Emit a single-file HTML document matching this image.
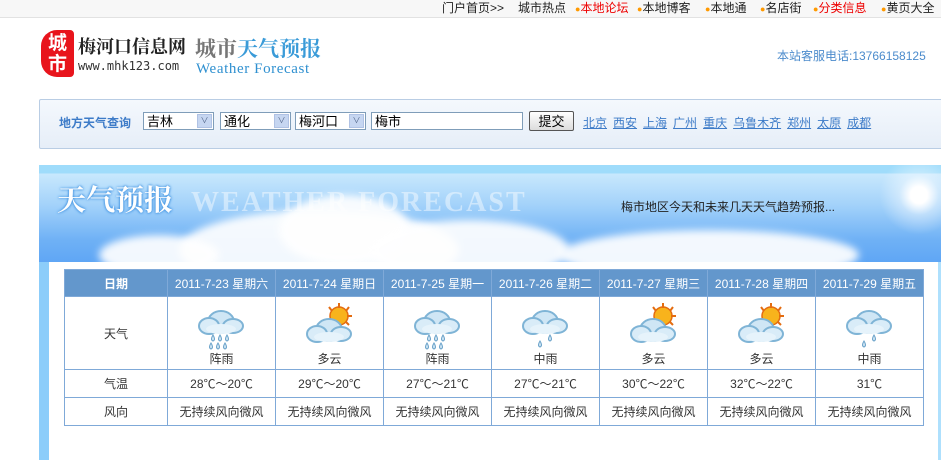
<!DOCTYPE html>
<html><head><meta charset="utf-8"><style>
body{margin:0;width:941px;height:460px;overflow:hidden;background:#fff;font-family:"Liberation Sans","Noto Sans CJK SC",sans-serif;font-size:12px;position:relative}
.a{position:absolute}
.top{left:0;top:0;width:941px;height:17px;background:#f7f7f7;border-bottom:1px solid #e2e2e2}
.top span{position:absolute;top:-1px;font-size:12px;color:#222;white-space:nowrap}
.dot{color:#f90;font-size:9px}
.red{color:#e00!important}
.search{left:39px;top:99px;width:910px;height:48px;background:linear-gradient(#f4f8fd,#e6eef8);border:1px solid #b9cde4;border-radius:2px}
.sel{position:absolute;top:12px;height:18px;border:1px solid #7f9db9;background:#fff;font-size:13px;line-height:18px;padding-left:3px;box-sizing:border-box}
.sel i{position:absolute;right:1px;top:1px;width:15px;height:14px;background:#c6d6f1;border:1px solid #b0c2e4;box-sizing:border-box;color:#4d6185;font-size:8px;text-align:center;line-height:12px;font-style:normal}
.lk a{color:#3d7bc8;text-decoration:underline;margin-right:6px;font-size:12px}
.panel{left:39px;top:165px;width:902px;height:295px;background:linear-gradient(90deg,#8ccdfa,#aee0fd);}
.banner{left:39px;top:165px;width:902px;height:97px;background:linear-gradient(#9fdcfb 0,#9fdcfb 8px,#c8e8fd 9px,#a3d2fa 40px,#6fb1f5 75px,#5fa6f5 97px)}
.cloud{position:absolute;background:#fff;border-radius:50%;filter:blur(4px);opacity:.92}
.inner{left:49px;top:262px;width:889px;height:198px;background:#fff}
table{position:absolute;left:64px;top:269px;border-collapse:collapse;width:859px;table-layout:fixed}
td{border:1px solid #7fa9d8;text-align:center;color:#333;font-size:12px;padding:0}
tr.h td{background:#6397cc;color:#fff;height:26px;font-size:12px}
</style></head><body>
<div class="a top">
<span style="left:442px">门户首页&gt;&gt;</span>
<span style="left:518px">城市热点</span>
<span style="left:575px"><b class="dot">●</b><span class="red" style="position:static">本地论坛</span></span>
<span style="left:637px"><b class="dot">●</b>本地博客</span>
<span style="left:705px"><b class="dot">●</b>本地通</span>
<span style="left:760px"><b class="dot">●</b>名店街</span>
<span style="left:813px"><b class="dot">●</b><span class="red" style="position:static">分类信息</span></span>
<span style="left:881px"><b class="dot">●</b>黄页大全</span>
</div>
<div class="a" style="left:41px;top:30px;width:33px;height:47px;background:#e8141c;border-radius:16px 4px 4px 16px;color:#fff;font-weight:bold;font-size:19px;line-height:21px;text-align:center;padding-top:3px;box-sizing:border-box">城<br>市</div>
<div class="a" style="left:78px;top:34px;font-size:18px;font-weight:bold;color:#222;font-family:'Noto Serif CJK SC',serif;line-height:24px;white-space:nowrap">梅河口信息网</div>
<div class="a" style="left:78px;top:60px;font-size:12px;color:#333;font-family:'DejaVu Sans Mono',monospace;line-height:12px">www.mhk123.com</div>
<div class="a" style="left:195px;top:35px;font-size:21px;font-weight:bold;color:#777;font-family:'Noto Serif CJK SC',serif;line-height:26px;white-space:nowrap">城市<span style="color:#3a9bd8">天气预报</span></div>
<div class="a" style="left:196px;top:60px;font-size:15px;color:#2f90d0;font-family:'Liberation Serif',serif;line-height:18px;letter-spacing:.6px;white-space:nowrap">Weather Forecast</div>
<div class="a" style="left:777px;top:47px;font-size:12px;color:#4b8bcc">本站客服电话:13766158125</div>

<div class="a search">
<div class="a" style="left:19px;top:14px;font-weight:bold;color:#3d7bc8;font-size:12px">地方天气查询</div>
<div class="sel" style="left:103px;width:71px">吉林<i>∨</i></div>
<div class="sel" style="left:180px;width:71px">通化<i>∨</i></div>
<div class="sel" style="left:255px;width:71px">梅河口<i>∨</i></div>
<div class="sel" style="left:331px;width:152px">梅市</div>
<div class="a" style="left:489px;top:11px;width:45px;height:20px;border:1px solid #555;border-radius:2px;background:linear-gradient(#fff,#dcdcdc);text-align:center;line-height:19px;font-size:13px;box-sizing:border-box">提交</div>
<div class="a lk" style="left:543px;top:14px;white-space:nowrap"><a>北京</a><a>西安</a><a>上海</a><a>广州</a><a>重庆</a><a>乌鲁木齐</a><a>郑州</a><a>太原</a><a>成都</a></div>
</div>

<div class="a panel"></div>
<div class="a banner" style="overflow:hidden">
<div class="cloud" style="left:140px;top:45px;width:280px;height:80px"></div>
<div class="cloud" style="left:240px;top:30px;width:130px;height:70px"></div>
<div class="cloud" style="left:330px;top:55px;width:200px;height:60px"></div>
<div class="cloud" style="left:520px;top:65px;width:300px;height:50px"></div>
<div class="cloud" style="left:60px;top:70px;width:120px;height:40px"></div>
<div style="position:absolute;left:840px;top:-10px;width:80px;height:80px;border-radius:50%;background:radial-gradient(#fff 15%,rgba(255,255,255,.4) 35%,rgba(255,255,255,0) 70%)"></div>
<div style="position:absolute;left:18px;top:13px;font-size:29px;font-weight:bold;color:#fff;font-family:'Noto Serif CJK SC',serif;text-shadow:0 0 3px #3a8fe0,0 0 2px #3a8fe0">天气预报</div>
<div style="position:absolute;left:152px;top:22px;font-size:28px;font-weight:bold;color:rgba(255,255,255,.45);font-family:'Liberation Serif',serif;letter-spacing:2px">WEATHER FORECAST</div>
<div style="position:absolute;left:582px;top:33px;font-size:12px;color:#222">梅市地区今天和未来几天天气趋势预报...</div>
</div>
<div class="a inner"></div>

<svg width="0" height="0" style="position:absolute"><defs>
<g id="cl"><ellipse cx="24" cy="20" rx="13" ry="11" fill="#cfe6f5" stroke="#7fb4d6" stroke-width="2"/><ellipse cx="12" cy="24" rx="10" ry="8" fill="#d9ecf8" stroke="#7fb4d6" stroke-width="2"/><ellipse cx="36" cy="24" rx="10" ry="7" fill="#d9ecf8" stroke="#7fb4d6" stroke-width="2"/><ellipse cx="24" cy="27" rx="15" ry="5" fill="#e6f3fb"/></g>
<g id="sun"><circle cx="34" cy="14" r="9" fill="#f8b31c" stroke="#e46c10" stroke-width="1.5"/><path d="M34 1v5M44 5l-3 4M47 14h-5M44 23l-3-3M24 5l3 4" stroke="#e46c10" stroke-width="2"/></g>
<g id="drop"><path d="M0 0q-3 5 0 6q3-1 0-6z" fill="#cde4f3" stroke="#6aa2c9"/></g>
</defs></svg>

<table>
<colgroup><col style="width:103px"><col span="7" style="width:108px"></colgroup>
<tr class="h"><td><b>日期</b></td><td>2011-7-23 星期六</td><td>2011-7-24 星期日</td><td>2011-7-25 星期一</td><td>2011-7-26 星期二</td><td>2011-7-27 星期三</td><td>2011-7-28 星期四</td><td>2011-7-29 星期五</td></tr>
<tr style="height:73px"><td>天气</td>
<td><svg width="50" height="48" style="display:block;margin:2px auto 0"><use href="#cl"/><use href="#drop" x="16" y="33"/><use href="#drop" x="23" y="33"/><use href="#drop" x="30" y="33"/><use href="#drop" x="14" y="41"/><use href="#drop" x="21" y="41"/><use href="#drop" x="28" y="41"/></svg>阵雨</td>
<td><svg width="50" height="48" style="display:block;margin:2px auto 0"><use href="#sun"/><use href="#cl" y="8"/></svg>多云</td>
<td><svg width="50" height="48" style="display:block;margin:2px auto 0"><use href="#cl"/><use href="#drop" x="16" y="33"/><use href="#drop" x="23" y="33"/><use href="#drop" x="30" y="33"/><use href="#drop" x="14" y="41"/><use href="#drop" x="21" y="41"/><use href="#drop" x="28" y="41"/></svg>阵雨</td>
<td><svg width="50" height="48" style="display:block;margin:2px auto 0"><use href="#cl"/><use href="#drop" x="29" y="33"/><use href="#drop" x="19" y="39"/></svg>中雨</td>
<td><svg width="50" height="48" style="display:block;margin:2px auto 0"><use href="#sun"/><use href="#cl" y="8"/></svg>多云</td>
<td><svg width="50" height="48" style="display:block;margin:2px auto 0"><use href="#sun"/><use href="#cl" y="8"/></svg>多云</td>
<td><svg width="50" height="48" style="display:block;margin:2px auto 0"><use href="#cl"/><use href="#drop" x="29" y="33"/><use href="#drop" x="19" y="39"/></svg>中雨</td>
</tr>
<tr style="height:28px"><td>气温</td><td>28℃～20℃</td><td>29℃～20℃</td><td>27℃～21℃</td><td>27℃～21℃</td><td>30℃～22℃</td><td>32℃～22℃</td><td>31℃</td></tr>
<tr style="height:28px"><td>风向</td><td>无持续风向微风</td><td>无持续风向微风</td><td>无持续风向微风</td><td>无持续风向微风</td><td>无持续风向微风</td><td>无持续风向微风</td><td>无持续风向微风</td></tr>
</table>
</body></html>
